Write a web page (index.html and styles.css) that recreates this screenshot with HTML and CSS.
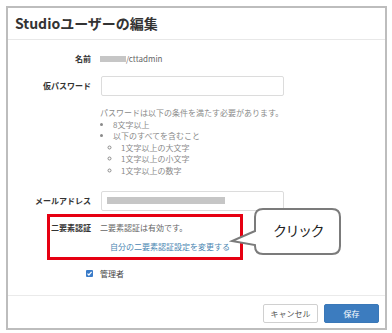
FILE: index.html
```html
<!DOCTYPE html>
<html lang="ja">
<head>
    <meta charset="utf-8" />
    <title>Studioユーザーの編集</title>
    <link rel="stylesheet" href="styles.css">
</head>
<body>
    <div class="modal">
        <div class="modalHead">Studioユーザーの編集</div>
        <div class="modalBody">
            <div class="row rowName">
                <div class="lbl">名前</div>
                <div class="val"><span class="mask maskName"></span>/cttadmin</div>
            </div>
            <div class="row rowPass">
                <div class="lbl">仮パスワード</div>
                <div class="val"><div class="txtBox"></div></div>
            </div>
            <div class="row rowHelp">
                <div class="lbl"></div>
                <div class="help">
                    <p>パスワードは以下の条件を満たす必要があります。</p>
                    <ul>
                        <li>8文字以上</li>
                        <li>以下のすべてを含むこと
                            <ul>
                                <li>1文字以上の大文字</li>
                                <li>1文字以上の小文字</li>
                                <li>1文字以上の数字</li>
                            </ul>
                        </li>
                    </ul>
                </div>
            </div>
            <div class="row rowMail">
                <div class="lbl">メールアドレス</div>
                <div class="val"><div class="txtBox"><span class="mask maskMail"></span></div></div>
            </div>
            <div class="mfaBox">
                <div class="lbl">二要素認証</div>
                <div class="val">
                    <div>二要素認証は有効です。</div>
                    <a class="mfaLink">自分の二要素認証設定を変更する</a>
                </div>
            </div>
            <div class="row rowAdmin">
                <div class="lbl"><span class="chk"><svg width="7" height="7" viewBox="0 0 7 7"><path d="M1.5 3.6 L2.9 5 L5.6 1.8" fill="none" stroke="#fff" stroke-width="1.2"/></svg></span></div>
                <div class="val dark">管理者</div>
            </div>
        </div>
        <div class="modalFoot">
            <span class="btn btnCancel">キャンセル</span>
            <span class="btn btnSave">保存</span>
        </div>
    </div>
    <div class="callout">
        <svg width="114" height="52" viewBox="0 0 114 52">
            <path d="M34 2 H103 Q111 2 111 10 V39 Q111 47 103 47 H34 Q26 47 26 39 V38 L3 34 L26 24 V10 Q26 2 34 2 Z" fill="#fff" stroke="#7b7b7b" stroke-width="2"/>
        </svg>
        <span class="calloutText">クリック</span>
    </div>
</body>
</html>
```

FILE: styles.css
```css
html{font-family:"Noto Sans CJK JP","Noto Sans",sans-serif;}
body{margin:0;background:#fff;width:392px;height:333px;position:relative;overflow:hidden;}
.modal{position:absolute;left:6px;top:6px;width:377px;height:320px;border:2px solid #bdbdbd;display:flex;flex-direction:column;}
.modalHead{height:32px;line-height:30px;padding-left:7px;font-size:14px;font-weight:bold;color:#333;border-bottom:1px solid #e8e8e8;box-sizing:border-box;}
.modalBody{flex:1;padding-top:13px;font-size:8px;line-height:12px;color:#666;}
.row{display:grid;grid-template-columns:83px 1fr;column-gap:9px;align-items:center;}
.lbl{text-align:right;font-weight:bold;color:#333;}
.rowPass{margin-top:11px;}
.rowHelp{margin-top:11px;align-items:start;}
.rowMail{margin-top:14px;}
.txtBox{width:181px;height:18px;border:1px solid #dcdcdc;border-radius:2px;margin-left:1px;display:flex;align-items:center;}
.rowMail .txtBox{height:18px;}
.mask{display:inline-block;background:#c6c6c6;}
.maskName{width:26px;height:6px;vertical-align:middle;margin-bottom:1px;}
.maskMail{width:118px;height:7px;margin-left:5px;}
.help{color:#8a8a8a;line-height:11.6px;}
.help p{margin:0;}
.help ul{margin:0;padding-left:13px;list-style:disc;}
.help ul ul{padding-left:8px;list-style:circle;}
.mfaBox{margin:3px 0 0 39px;width:190px;border:3px solid #e60012;display:grid;grid-template-columns:41px 1fr;column-gap:9px;padding:5px 0 4px;}
.mfaBox .val div{line-height:12px;}
.mfaLink{display:block;margin:7px 0 0 10px;color:#4a86b2;line-height:12px;}
.rowAdmin{margin-top:8px;}
.rowAdmin .lbl{display:flex;justify-content:flex-end;padding-right:-1px;}
.chk{width:7px;height:7px;background:#3a7bc8;border-radius:1px;display:block;margin-right:-2px;}
.chk svg{display:block;}
.dark{color:#444;}
.modalFoot{height:33px;border-top:1px solid #eaeaea;box-sizing:border-box;display:flex;justify-content:flex-end;align-items:center;gap:6px;padding:2px 6px 0 0;}
.btn{width:55px;height:19px;box-sizing:border-box;border-radius:2px;font-size:8px;line-height:17px;text-align:center;}
.btnCancel{border:1px solid #d0d0d0;color:#555;background:#fff;}
.btnSave{border:1px solid #3a78b8;background:#3c7cbf;color:#fff;}
.callout{position:absolute;left:229px;top:207px;width:114px;height:52px;}
.callout svg{display:block;}
.calloutText{position:absolute;left:44px;top:14px;font-size:14px;line-height:18px;color:#222;letter-spacing:-1.5px;}
```
